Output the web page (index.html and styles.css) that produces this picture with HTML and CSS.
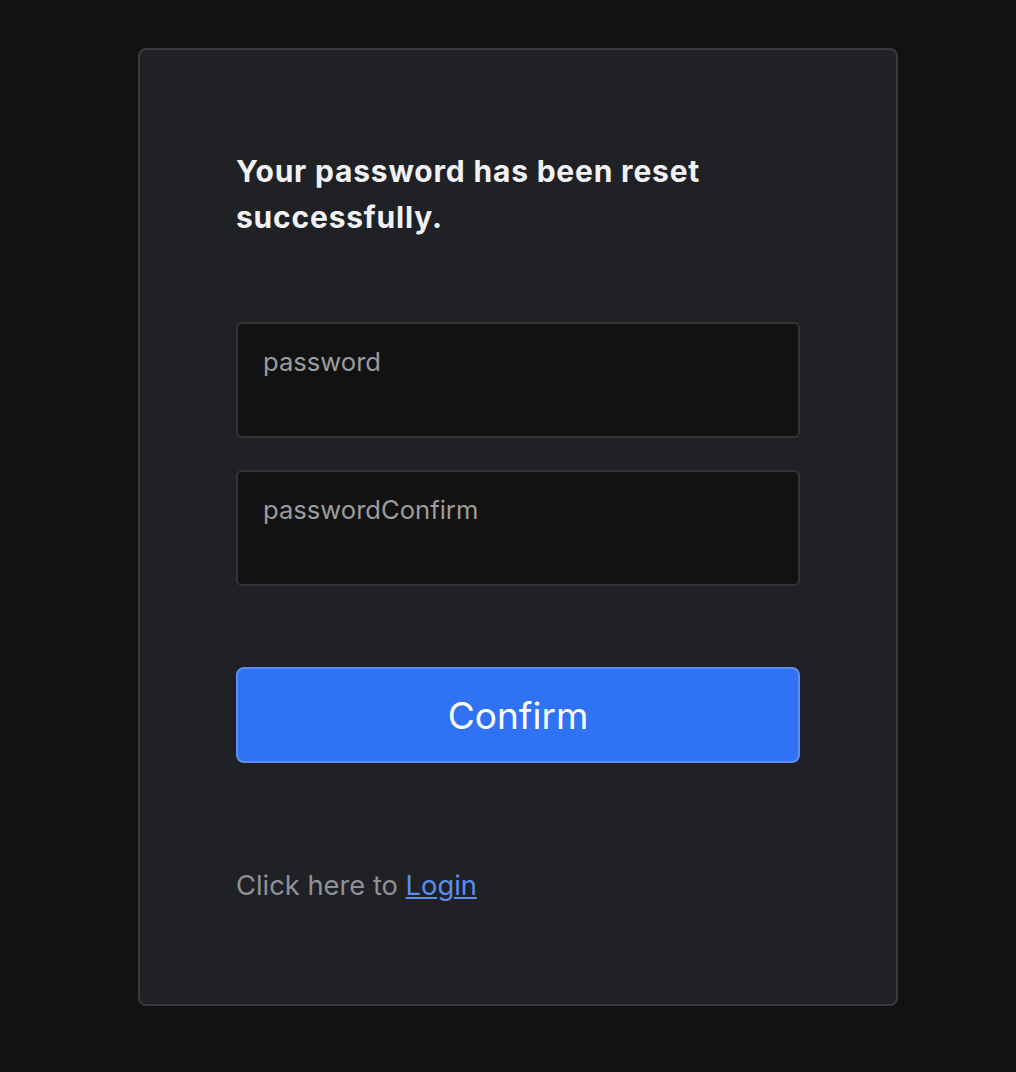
FILE: index.html
```html
<!DOCTYPE html>
<html>
<head>
<meta charset="utf-8">
<link rel="stylesheet" href="styles.css">
</head>
<body>
<div class="page">
  <div class="card">
    <h1 class="title">Your password has been reset successfully.</h1>
    <form class="form">
      <input class="field" type="password" placeholder="password">
      <input class="field" type="password" placeholder="passwordConfirm">
      <button class="btn" type="button">Confirm</button>
    </form>
    <p class="foot">Click here to <a class="link" href="#">Login</a></p>
  </div>
</div>
</body>
</html>
```
FILE: styles.css
```css
html, body {
  margin: 0;
  background: #121212;
  font-family: Inter, "Noto Sans", sans-serif;
}
.page {
  padding: 48px 0 0 138px;
}
.card {
  box-sizing: border-box;
  width: 760px;
  height: 958px;
  background: #202124;
  border: 2px solid #393a3d;
  border-radius: 8px;
  padding: 98px 96px 0 96px;
}
.title {
  margin: 0;
  width: 520px;
  font-size: 30px;
  line-height: 46px;
  font-weight: 700;
  letter-spacing: 0.8px;
  color: #f1f2f5;
}
.form {
  display: flex;
  flex-direction: column;
  margin-top: 82px;
}
.field {
  box-sizing: border-box;
  height: 116px;
  background: #121212;
  border: 2px solid #333437;
  border-radius: 6px;
  padding: 0 25px 38px;
  font-family: Inter, "Noto Sans", sans-serif;
  font-size: 25.6px;
  color: #e0e0e0;
  outline: none;
}
.field + .field {
  margin-top: 32px;
}
.field::placeholder {
  color: #9c9c9e;
}
.btn {
  margin-top: 81px;
  height: 96px;
  background: #2f72f4;
  border: 2px solid #5d8ff0;
  border-radius: 8px;
  color: #ffffff;
  font-family: Inter, "Noto Sans", sans-serif;
  font-size: 37px;
  cursor: pointer;
}
.foot {
  margin: 106px 0 0;
  font-size: 27.3px;
  color: #8e9196;
}
.link {
  color: #5b8ef0;
  text-decoration: underline;
}
```
